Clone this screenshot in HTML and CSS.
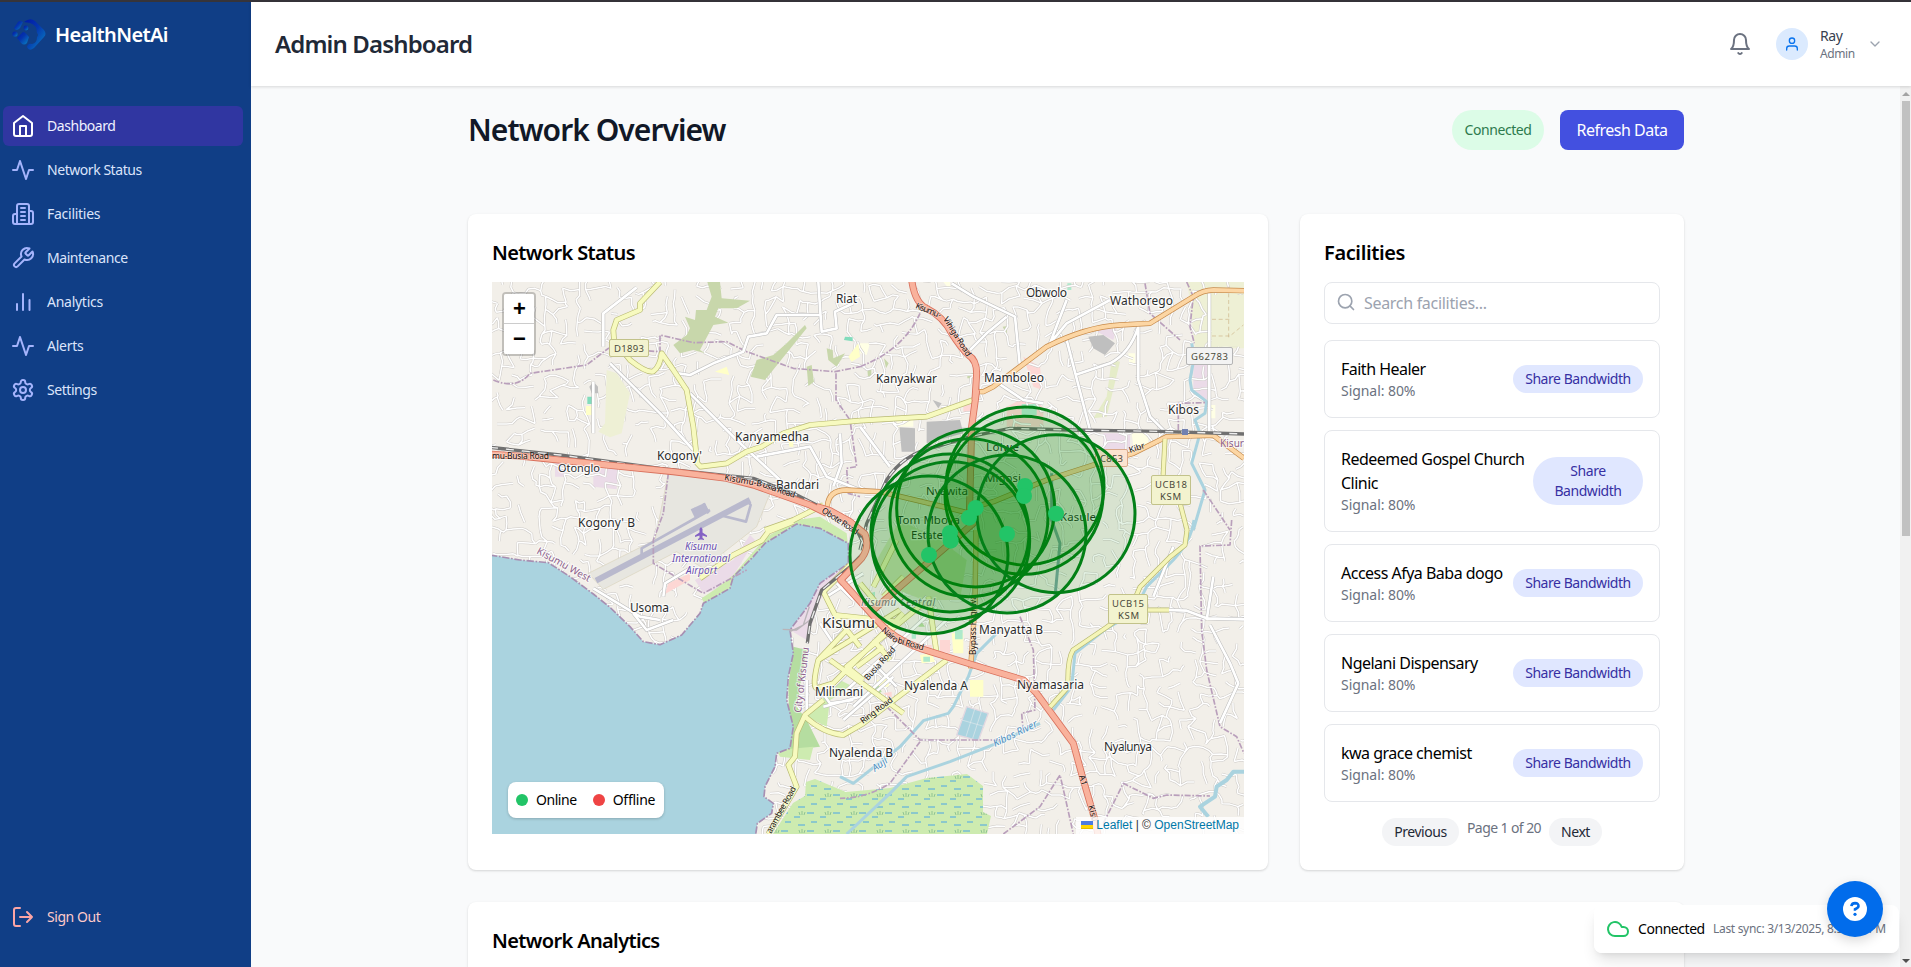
FILE: index.html
```html
<!DOCTYPE html>
<html lang="en">
<head>
<meta charset="utf-8">
<title>HealthNetAi</title>
<link rel="stylesheet" href="styles.css">
</head>
<body>
<div class="app">
  <aside class="sidebar">
    <div class="brand">
      <svg class="brand-logo" viewBox="0 0 34 34">
        <defs><linearGradient id="lg" x1="0" y1="0" x2="1" y2="1"><stop offset="0" stop-color="#0018a8"/><stop offset=".45" stop-color="#0536ad"/><stop offset="1" stop-color="#0a86c4"/></linearGradient></defs>
        <g fill="url(#lg)">
          <path d="M12 4Q18-1 23 3L32 12Q35 16 32 19L22 30Q17 34 15 29Q16 25 20 26Q25 25 25 19Q27 17 25 15Q25 7 18 5Z"/>
          <path d="M2 10L6 4Q8 2 11 4L8 10Q4 14 2 10Z"/><circle cx="3" cy="16" r="2.6"/><circle cx="14" cy="10" r="2.4"/>
          <path d="M5 20L11 14Q13 14 17 19L15 25Q12 28 9 25Z"/>
        </g>
      </svg>
      <span class="brand-name">HealthNetAi</span>
    </div>
    <nav class="nav">
      <a class="nav-item nav-item-active"><svg class="icon" viewBox="0 0 24 24"><path d="M3 9l9-7 9 7v11a2 2 0 0 1-2 2H5a2 2 0 0 1-2-2z"/><path d="M9 22V12h6v10"/></svg>Dashboard</a>
      <a class="nav-item"><svg class="icon" viewBox="0 0 24 24"><path d="M22 12h-4l-3 9L9 3l-3 9H2"/></svg>Network Status</a>
      <a class="nav-item"><svg class="icon" viewBox="0 0 24 24"><path d="M6 22V4a2 2 0 0 1 2-2h8a2 2 0 0 1 2 2v18Z"/><path d="M6 12H4a2 2 0 0 0-2 2v6a2 2 0 0 0 2 2h2M18 9h2a2 2 0 0 1 2 2v9a2 2 0 0 1-2 2h-2M10 6h4M10 10h4M10 14h4M10 18h4"/></svg><span class="loose">Facilities</span></a>
      <a class="nav-item"><svg class="icon" viewBox="0 0 24 24"><path d="M14.7 6.3a1 1 0 0 0 0 1.4l1.6 1.6a1 1 0 0 0 1.4 0l3.77-3.77a6 6 0 0 1-7.94 7.94l-6.91 6.91a2.12 2.12 0 0 1-3-3l6.91-6.91a6 6 0 0 1 7.94-7.94l-3.76 3.76z"/></svg>Maintenance</a>
      <a class="nav-item"><svg class="icon" viewBox="0 0 24 24"><path d="M18.5 20V10M12 20V4M6 20v-6"/></svg><span class="loose">Analytics</span></a>
      <a class="nav-item"><svg class="icon" viewBox="0 0 24 24"><path d="M22 12h-4l-3 9L9 3l-3 9H2"/></svg><span class="loose">Alerts</span></a>
      <a class="nav-item"><svg class="icon" viewBox="0 0 24 24"><path d="M12.22 2h-.44a2 2 0 0 0-2 2v.18a2 2 0 0 1-1 1.73l-.43.25a2 2 0 0 1-2 0l-.15-.08a2 2 0 0 0-2.73.73l-.22.38a2 2 0 0 0 .73 2.73l.15.1a2 2 0 0 1 1 1.72v.51a2 2 0 0 1-1 1.74l-.15.09a2 2 0 0 0-.73 2.73l.22.38a2 2 0 0 0 2.73.73l.15-.08a2 2 0 0 1 2 0l.43.25a2 2 0 0 1 1 1.73V20a2 2 0 0 0 2 2h.44a2 2 0 0 0 2-2v-.18a2 2 0 0 1 1-1.73l.43-.25a2 2 0 0 1 2 0l.15.08a2 2 0 0 0 2.73-.73l.22-.39a2 2 0 0 0-.73-2.73l-.15-.08a2 2 0 0 1-1-1.74v-.5a2 2 0 0 1 1-1.74l.15-.09a2 2 0 0 0 .73-2.73l-.22-.38a2 2 0 0 0-2.73-.73l-.15.08a2 2 0 0 1-2 0l-.43-.25a2 2 0 0 1-1-1.73V4a2 2 0 0 0-2-2z"/><circle cx="12" cy="12" r="3"/></svg>Settings</a>
    </nav>
    <a class="nav-item sign-out"><svg class="icon" viewBox="0 0 24 24"><path d="M9 21H5a2 2 0 0 1-2-2V5a2 2 0 0 1 2-2h4M16 17l5-5-5-5M21 12H9"/></svg>Sign Out</a>
  </aside>

  <div class="page">
    <header class="topbar">
      <h1 class="page-title">Admin Dashboard</h1>
      <div class="account">
        <svg class="icon bell" viewBox="0 0 24 24"><path d="M18 8A6 6 0 0 0 6 8c0 7-3 9-3 9h18s-3-2-3-9M13.73 21a2 2 0 0 1-3.46 0"/></svg>
        <div class="avatar"><svg class="icon avatar-icon" viewBox="0 0 24 24"><path d="M20 21v-2a4 4 0 0 0-4-4H8a4 4 0 0 0-4 4v2"/><circle cx="12" cy="7" r="4"/></svg></div>
        <div class="who"><div class="who-name">Ray</div><div class="who-role">Admin</div></div>
        <svg class="icon chevron" viewBox="0 0 24 24"><path d="M6 9l6 6 6-6"/></svg>
      </div>
    </header>

    <div class="scroll-area">
      <main class="content">
        <div class="heading-row">
          <h2 class="heading">Network Overview</h2>
          <div class="heading-actions">
            <span class="status-pill">Connected</span>
            <button class="refresh">Refresh Data</button>
          </div>
        </div>

        <div class="cards">
          <section class="card">
            <h3 class="card-title">Network Status</h3>
            <div class="map">
              <svg class="map-canvas" viewBox="492 282 752 552">
                <defs>
                  <pattern id="marsh" width="26" height="18" patternUnits="userSpaceOnUse"><rect width="26" height="18" fill="#cdebb0"/><path d="M1 3h7M14 7h6M5 12h6M18 15h7" stroke="#4aa5e6" stroke-width="1"/><path d="M22 5v-4M20 5l-1-3M24 5l1-3" stroke="#7fb98a" stroke-width=".8"/></pattern>
                </defs>
                <rect x="492" y="282" width="752" height="552" fill="#f2efe9"/>
                <g transform="translate(860 200) scale(.33333)">
                  <path fill="#eef0d5" d="M980 246H1152V445H1005L990 300Z"/>
                  <path fill="#ebdbe8" d="M1000 490H1042V600L1000 580ZM730 700H810V750H730ZM700 390L770 385L760 420Z"/>
                  <path fill="#ffffe5" d="M815 700H865V740H820ZM110 655H160V680H110ZM1050 615H1066V655H1050ZM250 246H270V270ZM805 460H825V495H808ZM0 430L30 430L20 465L0 460Z"/>
                  <path fill="#fdd7d4" d="M440 620L480 600H530L550 625V680H440ZM490 470L540 500L548 570L520 560ZM310 612H335V635H310Z"/>
                  <path fill="#aee9cb" d="M485 612H530V645H485ZM622 250H634V270H622Z"/>
                  <path fill="#e5ecc8" d="M755 480L780 485L740 650L700 655L740 590Z"/>
                  <path fill="#c8d7ab" d="M428 380L442 378L440 403ZM72 475L86 490L78 505ZM22 510L34 508L34 530L24 530ZM322 525L340 518V535H322Z"/>
                </g>
                <g transform="translate(460 200) scale(.33333)">
                  <path fill="#ebdbe8" d="M285 775H315V830H285ZM400 805L475 808L470 868L400 860Z"/>
                </g>
                <g id="streets"></g>
                <g transform="translate(860 200) scale(.33333)">
                  <path fill="#bfbfbf" d="M685 410L730 405L765 430L735 465L700 445ZM118 682L165 685V755H125ZM200 665L300 660L310 700L200 730ZM218 600L245 610L235 625Z"/>
                  <path fill="#eef0d5" d="M1054 284H1152V440H1054Z"/><path fill="none" stroke="#cdb58a" stroke-width="2" stroke-dasharray="12 8" d="M1106 260V420M1056 358H1110M1056 408H1110L1150 375"/>
                </g>
                <g transform="translate(460 200) scale(.33333)">
                  <path fill="#eef0d5" d="M440 510L470 520L510 580L485 700L450 712L415 695L435 670Z"/>
                  <path fill="#ffffc8" d="M765 515L800 500L808 525ZM378 618H395V645H378ZM985 720L1000 715V740H988ZM1165 470L1195 430L1200 470L1175 485Z"/>
                  <path fill="#82dcbc" d="M382 590H396V612H382ZM1155 410L1178 412V424L1152 420Z"/>
                  <path fill="#bfbfbf" d="M388 560L400 545L414 560V580H395Z"/>
                </g>
                <g transform="translate(460 200) scale(.33333)" fill="#c8d7ab">
                  <path d="M742 246H780L785 295L870 302L830 325L775 325L765 350L805 368L760 375L720 450L735 460L700 450L660 460L640 435L680 405L690 385L675 350L705 360L708 330L740 330L755 290Z"/>
                  <path d="M1035 375L1040 385L915 540L872 530L890 480L940 465L980 430Z"/>
                  <path d="M1100 445L1118 450L1120 475L1155 460L1130 500L1105 480Z"/><path d="M1040 500L1055 495L1062 545L1045 558Z"/>
                </g>
                <g transform="translate(460 520) scale(.33333)">
                  <path fill="#e7e6e0" stroke="#d9d3bd" stroke-width="2" d="M625-140L800-120L930-80L890 20L730 145L650 95L430 208L385 160L585 60Z"/>
                  <path fill="none" stroke="#b9b9cd" stroke-width="18" d="M408 182L870-60"/>
                  <path fill="none" stroke="#b9b9cd" stroke-width="8" d="M545 108L545 85L750-30M700-35L720-10M730-50L745-20M860-60L872-45L858 5L790-12"/>
                  <path fill="#b9b9cd" d="M692-32L735-52L748-25L705-5Z"/>
                  <path fill="#fdd7d4" d="M625 190L690 160L690 180L615 222Z"/>
                  <path fill="#ebdbe8" d="M705 180L820 120L870 45L885 60L800 200L730 220Z"/>
                  <path fill="#cdebb0" d="M725 235L770 205L820 165L880 95L920 50L1010 0L1080-10L1160 40L1165 85L1080 30L1010 15L915 72L830 170L810 210L735 255Z"/>
                  <path fill="#ebdbe8" d="M1170 130L1090 180L1030 260L990 330L1040 360L1080 240Z"/>
                  <path fill="#b5dda0" d="M1000 380L1040 390L1025 470L1010 560L1040 600L1080 680L990 690L985 500Z"/>
                  <path fill="#cdebb0" d="M1040 590L1100 620L1110 540L1180 500L1140 480L1075 550ZM950 690L1060 680L1050 720L960 710Z"/>
                  <path fill="#aad3df" stroke="#a78fb2" stroke-width="5" stroke-dasharray="22 5 5 5" d="M90 105L180 120L265 128L330 170L400 222L450 262L510 320L550 365L600 374L665 345L720 280L730 250L810 205L820 170L880 110L915 70L1010 12L1080 25L1165 70L1165 130L1080 190L1050 250L990 330L1000 400L985 470L980 540L1000 620L990 685L950 700L945 740L915 800L912 830L940 850L935 880L892 910L886 950L90 950Z"/>
                  <path fill="none" stroke="#b9b4b8" stroke-width="4" d="M968 328L1010 330L1050 300M990 335L1030 315L1048 260"/>
                </g>
                <g transform="translate(840 520) scale(.33333)">
                  <path fill="#aad3df" stroke="#e3d8e0" stroke-width="4" d="M380 560L445 580L415 662L350 645Z"/>
                  <path stroke="#dfe9ec" stroke-width="2" d="M405 565L378 650M425 572L398 655M365 600L435 620"/>
                  <path fill="#fdd7d4" d="M300 360H330V400L300 395ZM250 375H275V392H250ZM130 520L155 515V535Z"/>
                  <path fill="#ffffc8" d="M335 340H370V400H340ZM390 480H430V530H390ZM110 480L150 475L145 500L115 500ZM240 405L275 400L285 425L245 430Z"/>
                  <path fill="#aee9cb" d="M345 330H368V358H345ZM215 340H228V356H215ZM90 220L105 215V235H92ZM250 410H270V425H250Z"/>
                  <path fill="#b5dda0" d="M240 300L255 320L235 320ZM85 510L115 495L125 515L100 530Z"/>
                  <path fill="#dbe8c2" d="M180 0L300 60L380 120L360 240L250 240L150 200L110 120Z"/>
                </g>
                <path fill="url(#marsh)" d="M806 782L815 779L846 792L890 788L927 778L967 774L983 786L983 812L991 816L987 834H773L793 803L805 796Z"/>

                <g class="river">
                  <g transform="translate(860 200) scale(.33333)"><path d="M995 430L1003 470L990 540L995 570L1040 605L1035 640L1005 660L1020 700L995 790L1035 870L1000 990"/></g>
                  <g transform="translate(840 520) scale(.33333)">
                    <path d="M1062 0Q1055 60 1000 120L920 200L880 280L800 325L705 400L695 500L640 570M480 330L410 400L385 470L340 560L325 580L250 602L180 680L40 790L0 770M600 610L470 670L330 725L200 770L150 820L20 942"/>
                    <path stroke-width="12" d="M1212 755L1180 755L1160 780L1130 800L1125 830L1080 860L1105 890"/>
                    <path stroke="#7fa8a8" d="M635-140L635 0L660 70L645 230"/>
                  </g>
                </g>
                <g class="border">
                  <g transform="translate(460 200) scale(.33333)"><path d="M100 540Q170 570 210 520L380 495L445 445L600 455L600 405L700 428L800 425L860 455L1000 505L1125 515L1200 500M1128 520L1128 600L1170 660L1190 800L1160 805L1165 880L1200 890M625 820L610 940L580 1020L580 1090L730 1180L860 1110"/></g>
                  <g transform="translate(860 200) scale(.33333)"><path d="M0 500Q130 450 180 340M980 246L1000 290L990 380L1003 430M955 690V610L1035 608M1030 870L1090 960L1110 990M855 250L870 340L960 420"/></g>
                  <g transform="translate(840 520) scale(.33333)"><path d="M1175 0L1170 75L1080 78L1085 330L1100 450L1140 620L1190 650L1212 700M140 560L240 660H480M240 665L150 790Q80 835 0 835M490 942L600 860L660 765L675 830L700 942M790 910L850 790L940 835L980 825L1110 828M540 290L580 390L585 570L545 580L550 640"/></g>
                </g>

                <g class="minor-case">
                  <g transform="translate(460 200) scale(.33333)"><path id="m1" d="M655 520L690 525L760 490L850 455L865 410L920 400L950 345L1085 345M1075 246L1085 395L1130 385L1125 335L1180 310M690 580L830 720L960 840M890 770L1050 740L1100 830L1200 870M1140 700L1145 790L1120 860M400 545V700M430 440V340L530 262M450 490L600 640L700 750"/></g>
                  <g transform="translate(860 200) scale(.33333)"><path id="m2" d="M275 250L340 290L465 350L480 500M620 300L570 430M570 430L620 370L750 300M620 420L690 690M645 525L750 490Q810 460 835 380L835 540L870 650L920 700M1048 280V700M400 540L490 600L550 610M330 450L380 400L440 350M0 680L90 800"/></g>
                  <g transform="translate(840 520) scale(.33333)"><path id="m3" d="M985 270L1040 272L1100 295L1212 298M1110 315L1170 430L1195 490L1140 610M1120 170L1100 300M1000 80L940 230"/></g>
                  <g transform="translate(460 520) scale(.33333)"><path id="m4" d="M400 205L540 290L600 300M610 230L615 190L690 145M520 280L560 330L640 300M1075 430L1150 330L1200 290M1060 480L1110 550L1180 540M1080 310L1120 370M1040 480V590M1120 500L1400 230M1150 520L1430 260M1180 560L1460 300M1130 190L1180 240M1100 230L1210 160M1190 470L1260 540M1240 430L1310 500M1150 600L1300 470M1090 560L1200 530"/></g>
                </g>
                <g class="minor-fill">
                  <g transform="translate(460 200) scale(.33333)"><use href="#m1"/></g><g transform="translate(860 200) scale(.33333)"><use href="#m2"/></g><g transform="translate(840 520) scale(.33333)"><use href="#m3"/></g><g transform="translate(460 520) scale(.33333)"><use href="#m4"/></g>
                </g>

                <defs>
                  <g id="yellow">
                    <g transform="translate(460 200) scale(.33333)"><path d="M600 246L540 310L540 330L470 360L460 390L462 420L510 480Q560 520 580 514Q600 500 605 460L640 510L680 570L700 680L712 790L722 800L800 790L860 755L905 740L970 700L1050 675L1200 662"/><path d="M915 990L1000 960L1090 915"/></g>
                    <g transform="translate(860 200) scale(.33333)"><path d="M0 662L200 650L340 600"/></g>
                    <g transform="translate(460 520) scale(.33333)"><path d="M720 175L820 105L905 62L925 35L1000 5"/><path d="M1170 135L1090 215L1125 285L1310 305M1125 285L1200 380M1320 270L1075 420Q1055 500 1070 505L1120 490L1330 280M1075 420L1160 330M1110 420L1330 580M1210 480L1160 440L1390 250M1240 360L1290 420M1090 540L1035 585L1010 640L1005 710L985 735L1010 800L925 942M1035 590Q1090 640 1150 645L1210 610L1460 420"/></g>
                    <g transform="translate(840 520) scale(.33333)"><path d="M50 440L130 380M265 230L290 400M130 230L190 170M110 250L60 190M170 60L100 200"/></g>
                  </g>
                  <g id="orange">
                    <g transform="translate(860 200) scale(.33333)"><path d="M345 575H370L400 560L560 440Q680 380 780 375L870 370L1000 290Q1030 270 1060 270L1152 272"/><path d="M330 925L400 905L560 840L700 795L820 760L920 710L1060 706L1152 775"/></g>
                    <g transform="translate(770 390) scale(.33333)"><path d="M172 350Q175 300 230 300L330 305L540 355L600 370M618 420L615 640L602 835"/></g>
                  </g>
                  <g id="trunk">
                    <g transform="translate(460 200) scale(.33333)"><path d="M90 762L200 770L440 795L640 815L800 835L880 855L1050 915L1100 940"/></g>
                    <g transform="translate(770 390) scale(.33333)"><path d="M140 350L180 362L240 395L285 432Q300 470 275 505L212 570L330 700Q370 745 450 775L600 822L760 870L800 910L910 1060L940 1170L975 1290L985 1340M620 0L605 110L598 380L610 400L390 590L310 660"/></g>
                    <g transform="translate(860 200) scale(.33333)"><path d="M155 240Q165 310 200 325Q250 350 275 400Q300 440 325 465Q350 480 350 520L345 600"/></g>
                  </g>
                  <g id="rail">
                    <g transform="translate(460 200) scale(.33333)"><path d="M90 742L300 765L600 805L880 835L1000 880L1180 970"/></g>
                    <g transform="translate(770 390) scale(.33333)"><path d="M250 400L290 480L240 530L155 600L120 700L112 760M270 480L290 400L350 270Q400 190 500 170L600 140L720 115L900 120L1170 124L1422 132"/></g>
                  </g>
                </defs>
                <use href="#yellow" class="yellow-case"/><use href="#yellow" class="yellow-fill"/>
                <use href="#orange" class="orange-case"/><use href="#orange" class="orange-fill"/>
                <use href="#rail" class="rail-case"/><use href="#rail" class="rail-dash"/>
                <use href="#trunk" class="trunk-case"/><use href="#trunk" class="trunk-fill"/>
                <g fill="none"><path id="ucb" d="M1185 522V522L1163 441" stroke="none"/>
                  <path stroke="#b6b770" stroke-width="5" d="M1165 439L1163 477L1180 503L1187 530L1185 545L1170 557L1140 587L1130 610L1107 627L1073 650Q1067 660 1068 687L1050 707M1148 610H1169"/>
                  <path stroke="#f5f5b8" stroke-width="3.6" d="M1165 439L1163 477L1180 503L1187 530L1185 545L1170 557L1140 587L1130 610L1107 627L1073 650Q1067 660 1068 687L1050 707M1148 610H1169"/></g>
                <rect x="1182" y="429" width="6" height="6" fill="#7381b0"/>

                <g class="shield">
                  <rect x="609.5" y="339.5" width="39" height="17" rx="1.5"/><rect x="1151.5" y="475.5" width="39" height="29" rx="1.5"/><rect x="1108.5" y="594.5" width="39" height="29" rx="1.5"/>
                  <rect x="1186.5" y="347.5" width="46" height="17" rx="1.5" fill="#f3f3f3" stroke="#b5b5b5"/><rect x="1095.500" y="449.5" width="32" height="17" rx="1.5" fill="#fbe3d0" stroke="#d9a98a"/>
                </g>
                <g class="shield-text">
                  <text x="614" y="352" textLength="30">D1893</text><text x="1191" y="360" textLength="37">G62783</text><text x="1100" y="462" textLength="23">C853</text>
                  <text x="1155" y="488" textLength="32">UCB18</text><text x="1160" y="500" textLength="21">KSM</text><text x="1112" y="607" textLength="32">UCB15</text><text x="1118" y="619" textLength="21">KSM</text>
                </g>
                <g class="place">
                  <text x="836" y="303" textLength="21">Riat</text><text x="1026" y="297" textLength="41">Obwolo</text><text x="1110" y="305" textLength="63">Wathorego</text>
                  <text x="876" y="383" textLength="61">Kanyakwar</text><text x="984" y="382" textLength="60">Mamboleo</text><text x="1168" y="414" textLength="31">Kibos</text>
                  <text x="735" y="441" textLength="74">Kanyamedha</text><text x="657" y="460" textLength="45">Kogony'</text><text x="558" y="472" textLength="42" font-size="11">Otonglo</text>
                  <text x="776" y="489" textLength="43">Bandari</text><text x="578" y="527" textLength="57">Kogony' B</text><text x="630" y="612" textLength="39">Usoma</text>
                  <text x="822" y="628" textLength="53" font-size="15">Kisumu</text><text x="815" y="696" textLength="48">Milimani</text><text x="829" y="757" textLength="64">Nyalenda B</text>
                  <text x="904" y="690" textLength="64">Nyalenda A</text><text x="979" y="634" textLength="64">Manyatta B</text><text x="1017" y="689" textLength="67">Nyamasaria</text><text x="1104" y="751" textLength="48">Nyalunya</text>
                  <g font-size="11.5"><text x="986" y="451" textLength="33">Lolwe</text><text x="985" y="482" textLength="36">Migosi</text><text x="926" y="495" textLength="42">Nyawita</text><text x="897" y="524" textLength="63">Tom Mboya</text><text x="911" y="539" textLength="32">Estate</text><text x="1060" y="521" textLength="36">Kasule</text></g>
                </g>
                <g class="district">
                  <text x="685" y="550" textLength="32" font-style="italic" fill="#6a4fb0">Kisumu</text><text x="672" y="562" textLength="58" font-style="italic" fill="#6a4fb0">International</text><text x="686" y="574" textLength="31" font-style="italic" fill="#6a4fb0">Airport</text>
                  <text x="861" y="606" textLength="74" font-style="italic" fill="#777">Kisumu Central</text>
                  <text transform="translate(536 553) rotate(29)" textLength="60">Kisumu West</text><text transform="translate(801 713) rotate(-83)" textLength="66">City of Kisumu</text>
                  <text x="1220" y="447" textLength="24">Kisur</text>
                  <text transform="translate(995 747) rotate(-26)" textLength="48" font-style="italic" fill="#4e8fc0">Kibos River</text><text transform="translate(875 772) rotate(-36)" font-style="italic" fill="#4e8fc0">Auji</text>
                </g>
                <path fill="#8461c4" d="M701 527l1.500 2v3.500l4.500 3v1.500l-4.500-1.500v2.500l1.500 1v1l-3-.6-3 .6v-1l1.500-1v-2.500l-4.500 1.500v-1.500l4.500-3v-3.500z"/>
                <g class="road-name">
                  <text x="492" y="459" textLength="57">mu-Busia Road</text><text transform="translate(724 480) rotate(10)" textLength="38">Kisumu-B</text><text transform="translate(762 487) rotate(19)" textLength="34">usia Road</text>
                  <text transform="translate(821 512) rotate(33)" textLength="42">Obote Road</text><text transform="translate(915 308) rotate(22)" textLength="27">Kisumu -</text><text transform="translate(943 319) rotate(58)" textLength="45">Vihiga Road</text>
                  <text transform="translate(881 631) rotate(40)" textLength="19">Nairo</text><text transform="translate(897 643) rotate(16)" textLength="27">bi Road</text><text transform="translate(868 681) rotate(-48)" textLength="42">Busia Road</text>
                  <text transform="translate(863 724) rotate(-37)" textLength="38">Ring Road</text><text transform="translate(976 655) rotate(-90)" textLength="60">Bypass Highwa</text><text transform="translate(771 834) rotate(-61)" textLength="52">arambee Road</text>
                  <text transform="translate(1130 453) rotate(-18)">Kibr</text><text transform="translate(1079 776) rotate(74)">A1</text><text transform="translate(1088 806) rotate(74)">Kisu</text>
                </g>
                <g class="coverage" transform="translate(770 390) scale(.33333)">
                  <circle cx="765" cy="288" r="237"/><circle cx="762" cy="316" r="237"/><circle cx="617" cy="354" r="237"/><circle cx="597" cy="383" r="237"/><circle cx="540" cy="429" r="237"/><circle cx="542" cy="452" r="237"/><circle cx="477" cy="495" r="237"/><circle cx="711" cy="432" r="237"/><circle cx="858" cy="371" r="237"/>
                </g>
                <g class="marker" transform="translate(770 390) scale(.33333)">
                  <circle cx="765" cy="288" r="24"/><circle cx="762" cy="318" r="24"/><circle cx="617" cy="354" r="24"/><circle cx="597" cy="383" r="24"/><circle cx="540" cy="429" r="24"/><circle cx="542" cy="452" r="24"/><circle cx="477" cy="495" r="24"/><circle cx="711" cy="432" r="24"/><circle cx="858" cy="371" r="24"/>
                </g>
              </svg>
              <div class="zoom-control"><button class="zoom-button">+</button><button class="zoom-button">−</button></div>
              <div class="legend"><span class="legend-item"><i class="dot dot-online"></i>Online</span><span class="legend-item"><i class="dot dot-offline"></i><span class="loose">Offline</span></span></div>
              <div class="attribution"><svg class="flag" viewBox="0 0 12 8"><path fill="#4c7be1" d="M0 0h12v4H0z"/><path fill="#ffd500" d="M0 4h12v3H0z"/><path fill="#e0bc00" d="M0 7h12v1H0z"/></svg> <a>Leaflet</a> | © <a>OpenStreetMap</a></div>
            </div>
          </section>

          <section class="card">
            <h3 class="card-title"><span class="loose">Facilities</span></h3>
            <div class="search"><svg class="icon search-icon" viewBox="0 0 24 24"><circle cx="11" cy="11" r="8"/><path d="M21 21l-4.300-4.300"/></svg><span class="loose">Search facilities...</span></div>
            <div class="facility-list">
              <div class="facility"><div><div class="facility-name">Faith Healer</div><div class="facility-signal">Signal: 80%</div></div><button class="share">Share Bandwidth</button></div>
              <div class="facility"><div><div class="facility-name">Redeemed Gospel Church<br>Clinic</div><div class="facility-signal">Signal: 80%</div></div><button class="share share-narrow">Share<br>Bandwidth</button></div>
              <div class="facility"><div><div class="facility-name">Access Afya Baba dogo</div><div class="facility-signal">Signal: 80%</div></div><button class="share">Share Bandwidth</button></div>
              <div class="facility"><div><div class="facility-name">Ngelani Dispensary</div><div class="facility-signal">Signal: 80%</div></div><button class="share">Share Bandwidth</button></div>
              <div class="facility"><div><div class="facility-name">kwa grace chemist</div><div class="facility-signal">Signal: 80%</div></div><button class="share">Share Bandwidth</button></div>
            </div>
            <div class="pager"><button class="pager-button pager-prev">Previous</button><span class="pager-text">Page 1 of 20</span><button class="pager-button pager-next">Next</button></div>
          </section>
        </div>

        <section class="card analytics"><h3 class="card-title">Network Analytics</h3></section>
      </main>
      <div class="scrollbar"><i class="arrow-up"></i><i class="thumb"></i><i class="arrow-down"></i></div>
    </div>
  </div>
</div>
<div class="toast"><svg class="icon cloud" viewBox="0 0 24 24"><path d="M17.500 19H9a7 7 0 1 1 6.710-9h1.790a4.500 4.500 0 1 1 0 9Z"/></svg><span class="toast-state">Connected</span><span class="toast-sync">Last sync: 3/13/2025, 8:34:52 PM</span></div>
<div class="help"><svg class="help-icon" viewBox="0 0 24 24"><circle cx="12" cy="12" r="12" fill="#fff"/><path d="M8.400 9.200Q8.700 6.100 12.100 6.100Q15.600 6.200 15.500 9.100Q15.400 10.700 12 12.300V13.800" fill="none" stroke="#016ceb" stroke-width="2.600"/><circle cx="12" cy="17.300" r="1.600" fill="#016ceb"/></svg></div>
<script src="map.js"></script>
</body>
</html>
```
FILE: map.js
```js
// Side streets: a jittered grid whose neighbouring nodes are joined at random.
(function () {
  var seed = 7;
  function rnd() { seed = (seed * 16807) % 2147483647; return seed / 2147483647; }
  var step = 11, cols = 70, rows = 52, nodes = [];
  for (var r = 0; r < rows; r++) {
    nodes.push([]);
    for (var c = 0; c < cols; c++) {
      nodes[r].push([488 + c * step + (rnd() - 0.5) * 9, 278 + r * step + (rnd() - 0.5) * 9]);
    }
  }
  var d = '';
  function join(a, b) {
    var mx = (a[0] + b[0]) / 2 + (rnd() - 0.5) * 4, my = (a[1] + b[1]) / 2 + (rnd() - 0.5) * 4;
    d += 'M' + a[0].toFixed(1) + ' ' + a[1].toFixed(1) + 'L' + mx.toFixed(1) + ' ' + my.toFixed(1) + 'L' + b[0].toFixed(1) + ' ' + b[1].toFixed(1);
  }
  for (r = 0; r < rows - 1; r++) {
    for (c = 0; c < cols - 1; c++) {
      if (rnd() < 0.45) join(nodes[r][c], nodes[r][c + 1]);
      if (rnd() < 0.45) join(nodes[r][c], nodes[r + 1][c]);
    }
  }
  document.getElementById('streets').innerHTML =
    '<path class="street-case" d="' + d + '"/><path class="street-fill" d="' + d + '"/>';
})();
```
FILE: styles.css
```css
* { box-sizing: border-box; letter-spacing: -.032em; }
body { margin: 0; height: 967px; overflow: hidden; font-family: "Noto Sans", "Open Sans", sans-serif; font-size: 16px; line-height: 24px; color: #000; background: #f9fafb; }
h1, h2, h3 { margin: 0; font-weight: 600; }
button { border: 0; padding: 0; font: inherit; color: inherit; }
.loose { letter-spacing: -.019em; }
.app { display: flex; height: 967px; border-top: 2px solid #36343a; }
.icon { width: 24px; height: 24px; flex: none; fill: none; stroke: currentColor; stroke-width: 2; stroke-linecap: round; stroke-linejoin: round; }

.sidebar { width: 251px; flex: none; display: flex; flex-direction: column; padding: 13px 8px 30px 3px; background: #103e86; }
.brand { display: flex; align-items: center; gap: 9px; height: 40px; padding-left: 9px; margin-bottom: 51px; }
.brand-logo { width: 34px; height: 34px; }
.brand-name { color: #fff; font-size: 20px; font-weight: 600; }
.nav { display: flex; flex-direction: column; gap: 4px; }
.nav-item { display: flex; align-items: center; gap: 12px; height: 40px; padding-left: 8px; border-radius: 6px; font-size: 14px; color: #dbe4fb; }
.nav-item .icon { color: #a5b4fc; }
.nav-item-active { background: #3036a1; color: #f0f2ff; }
.nav-item-active .icon { color: #fff; }
.sign-out { margin-top: auto; color: #fecaca; }
.sign-out .icon { color: #fca5a5; }

.page { flex: 1; min-width: 0; display: flex; flex-direction: column; }
.topbar { position: relative; display: flex; align-items: center; justify-content: space-between; height: 84px; padding: 0 28px 0 24px; background: #fff; box-shadow: 0 1px 3px rgba(0, 0, 0, .14); }
.page-title { font-size: 24px; line-height: 32px; letter-spacing: -.036em; color: #1f2937; }
.account { display: flex; align-items: center; }
.bell { color: #6b7280; margin-right: 24px; }
.avatar { display: flex; align-items: center; justify-content: center; width: 32px; height: 32px; border-radius: 50%; background: #dbeafe; color: #0a74ee; margin-right: 12px; }
.avatar-icon { width: 16px; height: 16px; }
.who { width: 47px; }
.who-name { font-size: 14px; line-height: 20px; color: #374151; }
.who-role { font-size: 12px; line-height: 16px; color: #6b7280; }
.chevron { width: 16px; height: 16px; color: #9ca3af; }

.scroll-area { flex: 1; min-height: 0; display: flex; }
.content { flex: 1; overflow: hidden; padding: 24px 216px 0 217px; }
.heading-row { display: flex; justify-content: space-between; align-items: center; height: 40px; margin-bottom: 64px; }
.heading { font-size: 30px; line-height: 36px; color: #111827; }
.heading-actions { display: flex; gap: 16px; }
.status-pill { display: flex; align-items: center; justify-content: center; width: 92px; height: 40px; border-radius: 20px; background: #dcfce7; color: #2d7a4d; font-size: 14px; }
.refresh { width: 124px; height: 40px; border-radius: 8px; background: #4350e0; color: #fff; }
.cards { display: grid; grid-template-columns: 800px 384px; gap: 32px; margin-bottom: 32px; }
.card { padding: 24px; border-radius: 8px; background: #fff; box-shadow: 0 1px 3px rgba(0, 0, 0, .1), 0 1px 2px rgba(0, 0, 0, .06); }
.card-title { margin-bottom: 16px; padding-top: 1px; font-size: 20px; line-height: 27px; }
.analytics { height: 300px; }

.map { position: relative; width: 752px; height: 552px; overflow: hidden; }
.map-canvas { display: block; width: 752px; height: 552px; font-family: "Noto Sans", sans-serif; }
.map-canvas text { letter-spacing: 0; }
.map-canvas path { stroke-linejoin: round; }
.street-case { fill: none; stroke: #cbc8c5; stroke-width: 2.5; }
.street-fill { fill: none; stroke: #fff; stroke-width: 1.5; }
.river { fill: none; stroke: #aad3df; stroke-width: 9; }
.border { fill: none; stroke: #b99fbb; stroke-width: 5; stroke-dasharray: 18 5 5 5; }
.minor-case { fill: none; stroke: #bbb; stroke-width: 11; }
.minor-fill { fill: none; stroke: #fff; stroke-width: 8; }
.yellow-case { fill: none; stroke: #b9ba73; stroke-width: 17; }
.yellow-fill { fill: none; stroke: #f7fabf; stroke-width: 13; }
.orange-case { fill: none; stroke: #c78a4a; stroke-width: 16; }
.orange-fill { fill: none; stroke: #fcd6a4; stroke-width: 12; }
.trunk-case { fill: none; stroke: #d8705c; stroke-width: 21; }
.trunk-fill { fill: none; stroke: #f9b29c; stroke-width: 16; }
.rail-case { fill: none; stroke: #707070; stroke-width: 10; }
.rail-dash { fill: none; stroke: #eee; stroke-width: 4; stroke-dasharray: 24 24; }
.shield { fill: #f3f3cf; stroke: #c2c28a; }
.shield-text { font-size: 9.5px; fill: #4a4a3a; }
.place { font-size: 12px; fill: #2c2c2c; stroke: rgba(255, 255, 255, .75); stroke-width: 2.5px; paint-order: stroke; }
.district { font-size: 10px; fill: #8d618b; stroke: rgba(255, 255, 255, .6); stroke-width: 2px; paint-order: stroke; }
.road-name { font-size: 8.5px; fill: #15100e; stroke: rgba(255, 255, 255, .35); stroke-width: 1.5px; paint-order: stroke; }
.coverage { fill: rgba(0, 128, 0, .105); stroke: #038018; stroke-width: 9; }
.marker { fill: #22c467; }
.zoom-control { position: absolute; left: 10px; top: 10px; width: 34px; border: 2px solid rgba(0, 0, 0, .2); border-radius: 4px; background-clip: padding-box; }
.zoom-button { display: block; width: 30px; height: 30px; background: #fff; font: bold 22px/30px "Liberation Sans", Arial, sans-serif; border-radius: 0 0 2px 2px; }
.zoom-button:first-child { border-bottom: 1px solid #ccc; border-radius: 2px 2px 0 0; }
.legend { position: absolute; left: 16px; bottom: 16px; display: flex; gap: 16px; align-items: center; width: 156px; height: 36px; padding: 0 8px; border-radius: 8px; background: #fff; font-size: 14px; box-shadow: 0 1px 3px rgba(0, 0, 0, .2); }
.legend-item { display: flex; align-items: center; gap: 8px; }
.dot { width: 12px; height: 12px; border-radius: 50%; }
.dot-online { background: #22c467; }
.dot-offline { background: #ef4444; }
.attribution { position: absolute; right: 0; bottom: 0; height: 17px; padding: 0 5px; background: rgba(255, 255, 255, .8); font: 12px/17px "Liberation Sans", Arial, sans-serif; color: #333; letter-spacing: 0; }
.attribution a { color: #0078a8; letter-spacing: 0; }
.flag { width: 12px; height: 8px; }

.search { display: flex; align-items: center; height: 42px; margin-bottom: 16px; padding: 0 11px; gap: 8px; border: 1px solid #e5e7eb; border-radius: 8px; color: #9ca3af; }
.search-icon { width: 20px; height: 20px; margin-bottom: 2px; }
.facility-list { display: flex; flex-direction: column; gap: 12px; margin-bottom: 16px; }
.facility { display: flex; align-items: center; justify-content: space-between; padding: 16px; border: 1px solid #e5e7eb; border-radius: 8px; white-space: nowrap; }
.facility-signal { font-size: 14px; line-height: 20px; letter-spacing: -.004em; color: #6b7280; }
.share { width: 130px; padding: 4px 0; border-radius: 24px; background: #e0e7ff; color: #3730a3; font-size: 14px; line-height: 20px; }
.share-narrow { width: 110px; }
.pager { display: flex; justify-content: center; gap: 8px; font-size: 14px; line-height: 20px; }
.pager-button { height: 28px; border-radius: 14px; background: #f3f4f6; color: #1f2937; }
.pager-prev { width: 77px; }
.pager-next { width: 53px; }
.pager-text { color: #6b7280; letter-spacing: -.042em; }

.scrollbar { width: 11px; flex: none; display: flex; flex-direction: column; align-items: center; background: #f1f1f1; }
.arrow-up { margin-top: 6px; border: 4px solid transparent; border-top: 0; border-bottom-color: #a3a3a3; }
.thumb { width: 8px; height: 435px; margin: 5px 0 auto; background: #c1c1c1; }
.arrow-down { margin-bottom: 4px; border: 4px solid transparent; border-bottom: 0; border-top-color: #505050; }

.toast { position: absolute; left: 1594px; top: 905px; width: 305px; height: 48px; display: flex; align-items: center; padding-left: 12px; border-radius: 8px; background: rgba(255, 255, 255, .96); box-shadow: 0 10px 15px -3px rgba(0, 0, 0, .12), 0 4px 6px -4px rgba(0, 0, 0, .1); white-space: nowrap; }
.cloud { color: #22c467; margin-right: 8px; }
.toast-state { width: 75px; font-size: 14px; }
.toast-sync { font-size: 12px; letter-spacing: -.026em; color: #6b7280; }
.help { position: absolute; left: 1827px; top: 881px; width: 56px; height: 56px; display: flex; align-items: center; justify-content: center; border-radius: 50%; background: #016ceb; box-shadow: 0 4px 12px rgba(0, 0, 0, .15); }
.help-icon { width: 24px; height: 24px; }
```
